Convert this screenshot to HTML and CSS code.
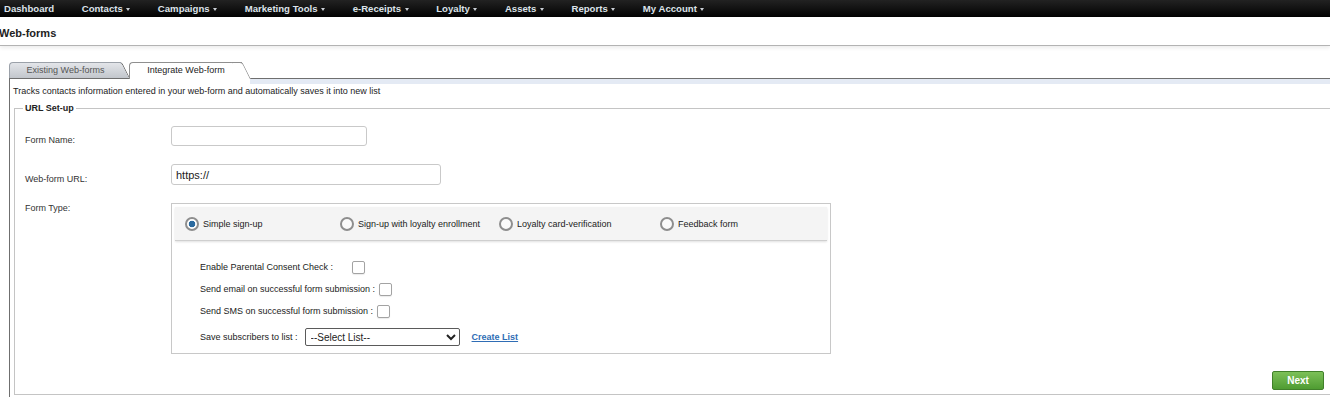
FILE: index.html
```html
<!DOCTYPE html>
<html lang="en">
<head>
    <meta charset="UTF-8">
    <meta name="viewport" content="width=device-width, initial-scale=1.0">
    <title>Web-forms</title>
    <link rel="stylesheet" href="styles.css">
</head>
<body>
    <nav class="topnav">
        <ul class="menu">
            <li>Dashboard</li>
            <li>Contacts<span class="caret"></span></li>
            <li>Campaigns<span class="caret"></span></li>
            <li>Marketing Tools<span class="caret"></span></li>
            <li>e-Receipts<span class="caret"></span></li>
            <li>Loyalty<span class="caret"></span></li>
            <li>Assets<span class="caret"></span></li>
            <li>Reports<span class="caret"></span></li>
            <li>My Account<span class="caret"></span></li>
        </ul>
    </nav>

    <header class="page-head">
        <h1 class="page-title">Web-forms</h1>
    </header>

    <main class="content">
        <div class="tabs">
            <div class="tab">Existing Web-forms</div>
            <div class="tab tab-active">Integrate Web-form</div>
        </div>

        <section class="panel">
            <div class="panel-band"></div>
            <p class="intro">Tracks contacts information entered in your web-form and automatically saves it into new list</p>

            <fieldset class="setup">
                <legend>URL Set-up</legend>

                <div class="field">
                    <label class="field-label" for="formName">Form Name:</label>
                    <input type="text" id="formName" class="text-input name-input">
                </div>

                <div class="field field-gap">
                    <label class="field-label" for="formUrl">Web-form URL:</label>
                    <input type="text" id="formUrl" class="text-input url-input" value="https://">
                </div>

                <div class="field field-gap field-top">
                    <span class="field-label">Form Type:</span>
                    <div class="type-box">
                        <div class="type-bar">
                            <label class="option"><input type="radio" name="formType" class="radio" checked> Simple sign-up</label>
                            <label class="option"><input type="radio" name="formType" class="radio"> Sign-up with loyalty enrollment</label>
                            <label class="option"><input type="radio" name="formType" class="radio"> Loyalty card-verification</label>
                            <label class="option"><input type="radio" name="formType" class="radio"> Feedback form</label>
                        </div>

                        <div class="type-settings">
                            <div class="setting">Enable Parental Consent Check :<input type="checkbox" class="check check-wide"></div>
                            <div class="setting">Send email on successful form submission :<input type="checkbox" class="check"></div>
                            <div class="setting">Send SMS on successful form submission :<input type="checkbox" class="check"></div>
                            <div class="setting setting-list">
                                Save subscribers to list :
                                <select class="list-select">
                                    <option>--Select List--</option>
                                </select>
                                <a href="#" class="create-link">Create List</a>
                            </div>
                        </div>
                    </div>
                </div>

                <div class="actions">
                    <button class="next-button">Next</button>
                </div>
            </fieldset>
        </section>
    </main>
</body>
</html>
```

FILE: styles.css
```css
/* reset */
* {
    margin: 0;
    padding: 0;
    box-sizing: border-box;
}

html,
body {
    overflow: hidden;
}

body {
    width: 1330px;
    height: 397px;
    font-family: "Liberation Sans", Arial, sans-serif;
    font-size: 9px;
    color: #222;
    background: #fff;
}

/* top menu */
.topnav {
    height: 17px;
    background: linear-gradient(#222, #020202);
}

.menu {
    display: flex;
    gap: 27.6px;
    padding-left: 4px;
    list-style: none;
    line-height: 17px;
    font-size: 9.6px;
    font-weight: bold;
    color: #dde3ea;
}

.caret {
    display: inline-block;
    vertical-align: middle;
    margin-left: 3.5px;
    border-top: 3px solid #c9ced4;
    border-left: 2px solid transparent;
    border-right: 2px solid transparent;
}

/* page title */
.page-head {
    height: 29px;
    padding-top: 10px;
    border-bottom: 1px solid #b3b3b3;
    box-shadow: 0 2px 4px rgba(0, 0, 0, 0.08);
}

.page-title {
    margin-left: -1px;
    font-size: 11px;
    line-height: 12px;
    font-weight: bold;
    color: #222;
}

.content {
    padding: 16px 0 0 9px;
}

/* tabs */
.tabs {
    display: flex;
    align-items: flex-start;
    height: 17px;
    border-bottom: 1px solid #6f6f6f;
}

.tab {
    position: relative;
    width: 112px;
    height: 16px;
    margin-right: 8px;
    line-height: 15px;
    text-align: center;
    color: #555;
    background: linear-gradient(#e3e5e9, #c2c6cc);
    border: 1px solid #9ba1a9;
    border-right: none;
    border-bottom: none;
    border-radius: 4px 0 0 0;
}

.tab::after {
    content: '';
    position: absolute;
    top: -1px;
    bottom: 0;
    left: calc(100% - 2px);
    width: 10px;
    background: inherit;
    border-top: 1px solid;
    border-right: 1px solid;
    border-color: inherit;
    border-top-right-radius: 3px;
    transform: skewX(26.5deg);
    transform-origin: bottom left;
}

.tab-active {
    z-index: 1;
    width: 113px;
    height: 17px;
    margin-bottom: -1px;
    color: #222;
    background: #fff;
    border-color: #8f8f8f;
}

/* panel */
.panel {
    min-height: 330px;
    border-left: 1px solid #6f6f6f;
}

.panel-band {
    height: 5px;
    margin-left: 240px;
    background: #e4eaf4;
}

.intro {
    margin-top: 2px;
    padding-left: 3px;
    line-height: 11px;
}

.setup {
    margin: 6px -15px 0 4px;
    padding: 12px 20px 4px 10px;
    border: 1px solid #c4c4c4;
}

.setup legend {
    margin-left: -2px;
    padding: 0 2px;
    line-height: 11px;
    font-weight: bold;
    color: #222;
}

.field {
    display: flex;
    align-items: flex-end;
}

.field-gap {
    margin-top: 18px;
}

.field-top {
    align-items: flex-start;
}

.field-label {
    width: 146px;
    flex-shrink: 0;
    line-height: 11px;
    color: #333;
}

.text-input {
    height: 20px;
    padding: 0 4px;
    border: 1px solid #c9c9c9;
    border-radius: 3px;
    font-family: "Liberation Sans", Arial, sans-serif;
    font-size: 11px;
    color: #222;
    outline: none;
}

.name-input {
    width: 196px;
}

.url-input {
    width: 270px;
    height: 21px;
}

/* form type box */
.type-box {
    width: 660px;
    height: 151px;
    padding: 3px;
    border: 1px solid #c8c8c8;
}

.type-bar {
    display: grid;
    grid-template-columns: 155px 159px 161px auto;
    align-items: center;
    height: 34px;
    padding-left: 10px;
    background: #f4f4f4;
    border-bottom: 1px solid #cfcfcf;
    box-shadow: 0 1px 2px rgba(0, 0, 0, 0.12);
}

.option {
    display: flex;
    align-items: center;
    gap: 4px;
    color: #222;
}

.radio {
    appearance: none;
    width: 14px;
    height: 14px;
    border: 2px solid #8e8e8e;
    border-radius: 50%;
    background: #fafafa;
}

.radio:checked {
    background: radial-gradient(circle, #2b6a9f 0 3px, #fff 3.6px);
}

.type-settings {
    padding: 15px 0 0 25px;
}

.setting {
    display: flex;
    align-items: center;
    height: 22px;
    color: #222;
}

.check {
    appearance: none;
    width: 13px;
    height: 13px;
    margin-left: 4px;
    border: 1px solid #a3a3a3;
    border-radius: 2px;
    background: #fff;
    box-shadow: 0 1px 1px rgba(0, 0, 0, 0.08);
}

.check-wide {
    margin-left: 19px;
}

.setting-list {
    margin-top: 4px;
}

.list-select {
    width: 155px;
    height: 18px;
    margin-left: 7px;
    padding-left: 1px;
    border: 1px solid #5a5a5a;
    border-radius: 2px;
    background: #fff;
    font-family: "Liberation Sans", Arial, sans-serif;
    font-size: 10px;
    color: #222;
}

.create-link {
    margin-left: 12px;
    font-weight: bold;
    color: #2f6db5;
}

/* next button */
.actions {
    display: flex;
    justify-content: flex-end;
    margin-top: 17px;
}

.next-button {
    width: 52px;
    height: 19px;
    border: 1px solid #41802a;
    border-radius: 2px;
    background: linear-gradient(#7cc058, #4f9c32);
    font-family: "Liberation Sans", Arial, sans-serif;
    font-size: 10px;
    font-weight: bold;
    color: #fff;
    cursor: pointer;
}
```
